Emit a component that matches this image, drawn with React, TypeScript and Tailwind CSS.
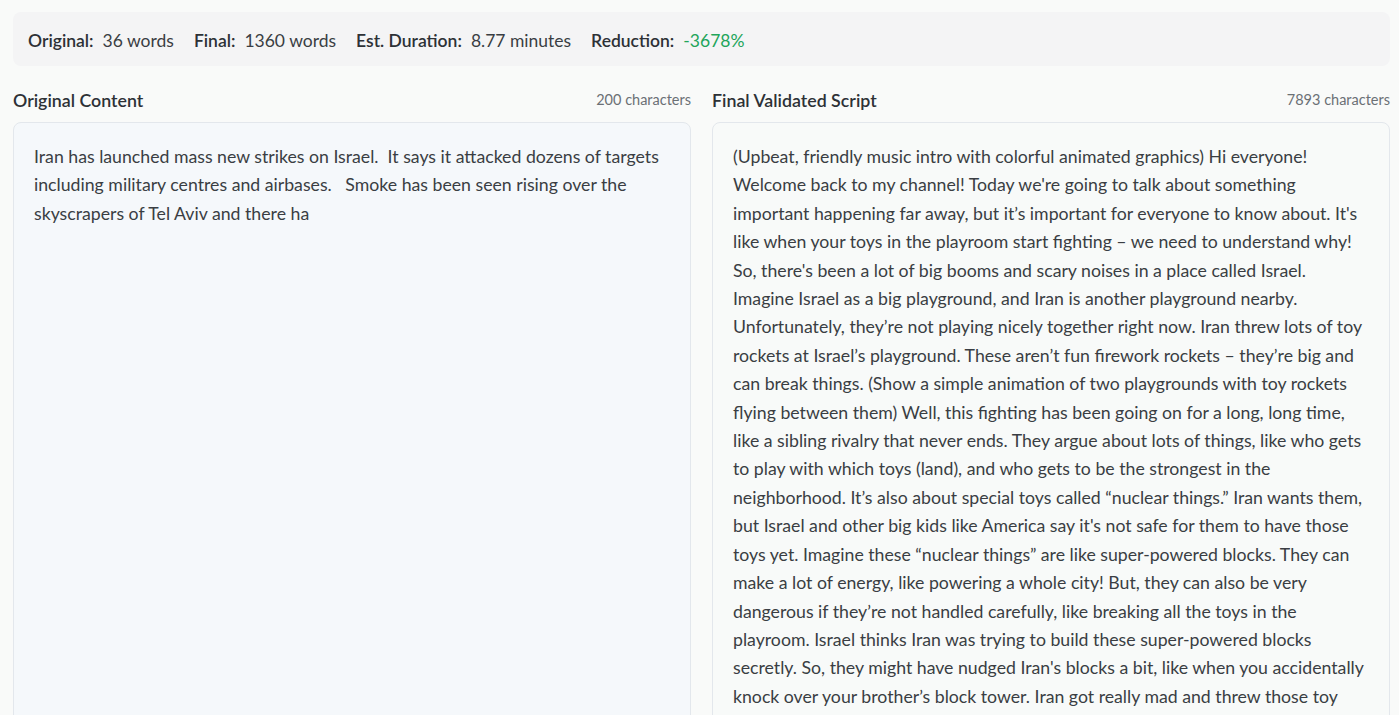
import React from 'react';

const originalText =
  'Iran has launched mass new strikes on Israel.  It says it attacked dozens of targets including military centres and airbases.   Smoke has been seen rising over the skyscrapers of Tel Aviv and there ha';

const finalText =
  "(Upbeat, friendly music intro with colorful animated graphics) Hi everyone! Welcome back to my channel! Today we're going to talk about something important happening far away, but it\u2019s important for everyone to know about. It's like when your toys in the playroom start fighting \u2013 we need to understand why! So, there's been a lot of big booms and scary noises in a place called Israel. Imagine Israel as a big playground, and Iran is another playground nearby. Unfortunately, they\u2019re not playing nicely together right now. Iran threw lots of toy rockets at Israel\u2019s playground. These aren\u2019t fun firework rockets \u2013 they\u2019re big and can break things. (Show a simple animation of two playgrounds with toy rockets flying between them) Well, this fighting has been going on for a long, long time, like a sibling rivalry that never ends. They argue about lots of things, like who gets to play with which toys (land), and who gets to be the strongest in the neighborhood. It\u2019s also about special toys called \u201cnuclear things.\u201d Iran wants them, but Israel and other big kids like America say it's not safe for them to have those toys yet. Imagine these \u201cnuclear things\u201d are like super-powered blocks. They can make a lot of energy, like powering a whole city! But, they can also be very dangerous if they\u2019re not handled carefully, like breaking all the toys in the playroom. Israel thinks Iran was trying to build these super-powered blocks secretly. So, they might have nudged Iran's blocks a bit, like when you accidentally knock over your brother\u2019s block tower. Iran got really mad and threw those toy rockets back, and now everyone is worried about what happens next. (Show a map with the two playgrounds highlighted) Lots of grown-ups around the world are trying to help them stop fighting and talk nicely again.";

const stats = [
  { label: 'Original:', value: '36 words' },
  { label: 'Final:', value: '1360 words' },
  { label: 'Est. Duration:', value: '8.77 minutes' },
  { label: 'Reduction:', value: '-3678%', green: true },
];

function Panel({ title, count, text, boxClass }: { title: string; count: string; text: string; boxClass: string }) {
  return (
    <div className="flex flex-col min-w-0">
      <div className="flex items-center justify-between h-6 mb-2.5">
        <h3 className="text-[17.8px] font-semibold text-[#2d3136]">{title}</h3>
        <span className="text-[14.5px] text-[#6b7075]">{count}</span>
      </div>
      <div className={`flex-1 rounded-lg border border-[#e3e7ec] px-5 pt-5 pb-5 ${boxClass}`}>
        <p className="whitespace-pre-wrap text-[17.7px] leading-[28.4px] text-[#3a3e43]">{text}</p>
      </div>
    </div>
  );
}

export default function App() {
  return (
    <div
      className="min-h-screen bg-[#f9faf9] pl-[13px] pr-[9px] pt-3 pb-6"
      style={{ fontFamily: 'Lato, "Noto Sans", sans-serif' }}
    >
      <div className="flex items-center gap-5 h-[54px] pt-1 rounded-lg bg-[#f4f4f5] px-[15px] text-[17.5px]">
        {stats.map((s) => (
          <div key={s.label} className="flex items-center gap-[9px]">
            <span className="font-semibold text-[#2d3136]">{s.label}</span>
            <span className={s.green ? 'text-[#22a55a]' : 'text-[#3a3e43]'}>{s.value}</span>
          </div>
        ))}
      </div>

      <div className="grid grid-cols-2 gap-[21px] mt-[22px]">
        <Panel title="Original Content" count="200 characters" text={originalText} boxClass="bg-[#f5f8fb]" />
        <Panel title="Final Validated Script" count="7893 characters" text={finalText} boxClass="bg-[#f8faf9]" />
      </div>
    </div>
  );
}
